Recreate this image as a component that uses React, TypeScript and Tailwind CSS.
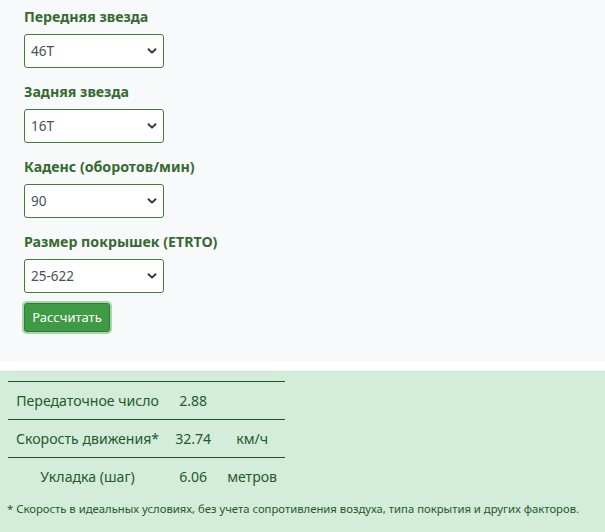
import React from "react";

const font = { fontFamily: '"Noto Sans", "Open Sans", sans-serif' };

function Chevron() {
  return (
    <svg width="10" height="8" viewBox="0 0 10 8" className="absolute right-[6px] top-1/2 -translate-y-1/2">
      <path d="M1.5 2.2 L5 5.6 L8.5 2.2" fill="none" stroke="#343a40" strokeWidth="2" strokeLinecap="round" strokeLinejoin="round" />
    </svg>
  );
}

function Field({ label, value }: { label: string; value: string }) {
  return (
    <div className="mb-[12px]">
      <div className="h-[24px] leading-[24px] text-[14.2px] font-bold text-[#356b30] mb-[5px]">{label}</div>
      <div className="relative w-[140px] h-[34px] rounded-[3px] border border-[#3e7d3a] bg-white">
        <span className="absolute left-[6px] top-1/2 -translate-y-1/2 text-[13.5px] text-[#495057]">{value}</span>
        <Chevron />
      </div>
    </div>
  );
}

export default function App() {
  const rows = [
    { name: "Передаточное число", val: "2.88", unit: "" },
    { name: "Скорость движения*", val: "32.74", unit: "км/ч" },
    { name: "Укладка (шаг)", val: "6.06", unit: "метров" },
  ];
  return (
    <div className="w-[605px] h-[532px] bg-white overflow-hidden" style={font}>
      <div className="bg-[#f8f9fa] h-[361px] pl-[24px] pt-[5px]">
        <Field label="Передняя звезда" value="46T" />
        <Field label="Задняя звезда" value="16T" />
        <Field label="Каденс (оборотов/мин)" value="90" />
        <Field label="Размер покрышек (ETRTO)" value="25-622" />
        <div className="-mt-[2px]">
          <button className="h-[29px] w-[86px] rounded-[3px] bg-[#3f9a45] border border-[#2f7d36] text-white text-[13px] shadow-[0_0_0_2px_#a6d7ad]">
            Рассчитать
          </button>
        </div>
      </div>
      <div className="mt-[10px] bg-[#d4edda] border-t border-[#c3e6cb] h-[200px] pt-[9px] px-[7px]">
        <table className="border-collapse text-[14.1px] text-[#1e5a2a] ml-[1px]">
          <tbody>
            {rows.map((r) => (
              <tr key={r.name} className="border-t border-[#155724]">
                <td className="px-[8px] h-[38px] text-center">{r.name}</td>
                <td className="px-[8px] h-[38px] text-center">{r.val}</td>
                <td className="px-[8px] h-[38px] text-center">{r.unit}</td>
              </tr>
            ))}
          </tbody>
        </table>
        <div className="mt-[5px] text-[11.3px] text-[#1e5a2a] whitespace-nowrap">
          * Скорость в идеальных условиях, без учета сопротивления воздуха, типа покрытия и других факторов.
        </div>
      </div>
    </div>
  );
}
